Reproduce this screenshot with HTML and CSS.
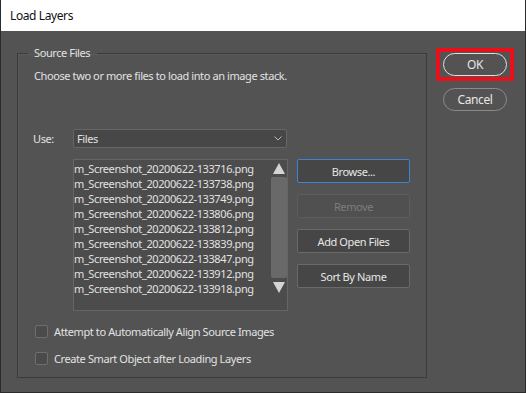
FILE: index.html
```html
<!DOCTYPE html>
<html lang="en">
<head>
    <meta charset="UTF-8">
    <title>Load Layers</title>
    <link rel="stylesheet" href="styles.css">
</head>
<body>
    <div class="dialog">
        <div class="titlebar">Load Layers</div>
        <div class="dialog-body">
            <fieldset class="group">
                <legend>Source Files</legend>
                <p class="hint">Choose two or more files to load into an image stack.</p>

                <div class="use-row">
                    <span class="use-label">Use:</span>
                    <div class="select">
                        <span>Files</span>
                        <svg class="chevron" width="8" height="5" viewBox="0 0 8 5">
                            <polyline points="0.5,0.5 4,4 7.5,0.5" fill="none" stroke="#b8b8b8" stroke-width="1"/>
                        </svg>
                    </div>
                </div>

                <div class="files-row">
                    <div class="file-list">
                        <ul class="files">
                            <li>m_Screenshot_20200622-133716.png</li>
                            <li>m_Screenshot_20200622-133738.png</li>
                            <li>m_Screenshot_20200622-133749.png</li>
                            <li>m_Screenshot_20200622-133806.png</li>
                            <li>m_Screenshot_20200622-133812.png</li>
                            <li>m_Screenshot_20200622-133839.png</li>
                            <li>m_Screenshot_20200622-133847.png</li>
                            <li>m_Screenshot_20200622-133912.png</li>
                            <li>m_Screenshot_20200622-133918.png</li>
                        </ul>
                        <div class="scrollbar">
                            <svg class="arrow" width="12" height="11" viewBox="0 0 12 11">
                                <polygon points="6,0 12,11 0,11" fill="#d4d4d4"/>
                            </svg>
                            <div class="thumb"></div>
                            <svg class="arrow" width="12" height="11" viewBox="0 0 12 11">
                                <polygon points="0,0 12,0 6,11" fill="#d4d4d4"/>
                            </svg>
                        </div>
                    </div>
                    <div class="file-buttons">
                        <button class="btn focused">Browse...</button>
                        <button class="btn" disabled>Remove</button>
                        <button class="btn">Add Open Files</button>
                        <button class="btn">Sort By Name</button>
                    </div>
                </div>

                <label class="check"><span class="box"></span>Attempt to Automatically Align Source Images</label>
                <label class="check"><span class="box"></span>Create Smart Object after Loading Layers</label>
            </fieldset>

            <div class="actions">
                <div class="ok-mark">
                    <button class="pill primary">OK</button>
                </div>
                <button class="pill">Cancel</button>
            </div>
        </div>
    </div>
</body>
</html>
```

FILE: styles.css
```css
body {
    margin: 0;
    background-color: #535353;
    font-family: "Noto Sans", sans-serif;
    font-size: 11px;
    letter-spacing: -0.4px;
}
.dialog {
    width: 524px;
    height: 392px;
    border: 1px solid #2b2b2b;
    border-top: none;
    background-color: #535353;
    color: #e2e2e2;
}
.titlebar {
    height: 31px;
    line-height: 32px;
    padding-left: 9px;
    background-color: #fff;
    color: #111;
    font-size: 12px;
}
.dialog-body {
    display: flex;
    align-items: flex-start;
    gap: 9px;
    padding-left: 16px;
}
.group {
    box-sizing: border-box;
    width: 410px;
    height: 332px;
    margin: 15px 0 0;
    padding: 0 15px;
    border: 1px solid #3b3b3b;
    box-shadow: inset 1px 1px 0 #5a5a5a;
}
.group legend {
    margin-left: -5px;
    padding: 0 7px 0 6px;
    line-height: 14px;
}
.hint {
    margin: 8px 0 0 1px;
    line-height: 15px;
}
.use-row {
    display: flex;
    align-items: center;
    margin-top: 46px;
}
.use-label {
    width: 40px;
}
.select {
    display: flex;
    align-items: center;
    justify-content: space-between;
    box-sizing: border-box;
    width: 214px;
    height: 19px;
    padding: 0 4px 0 3px;
    border: 1px solid #666;
    background-color: #474747;
    border-radius: 2px;
}
.files-row {
    display: flex;
    gap: 9px;
    margin: 11px 0 0 40px;
}
.file-list {
    display: flex;
    box-sizing: border-box;
    width: 215px;
    height: 152px;
    border: 1px solid #666;
    background-color: #4c4c4c;
}
.files {
    flex: 1;
    margin: 0;
    padding: 1px 0 0;
    list-style: none;
    line-height: 15px;
    white-space: nowrap;
    overflow: hidden;
}
.scrollbar {
    display: flex;
    flex-direction: column;
    align-items: center;
    width: 16px;
    height: 130px;
    padding-top: 3px;
}
.thumb {
    width: 16px;
    flex: 1;
    margin: 3px 0 4px;
    background-color: #696969;
    border-radius: 2px;
}
.file-buttons {
    display: flex;
    flex-direction: column;
    gap: 11px;
}
.btn {
    box-sizing: border-box;
    width: 113px;
    height: 24px;
    padding: 0;
    border: 1px solid #696969;
    border-radius: 2px;
    background-color: #464646;
    color: #e6e6e6;
    font: inherit;
    letter-spacing: inherit;
}
.btn.focused {
    border-color: #3f83d4;
}
.btn:disabled {
    border-color: #5d5d5d;
    background-color: #505050;
    color: #7d7d7d;
}
.check {
    display: flex;
    align-items: center;
    gap: 6px;
    margin: 13px 0 0 2px;
    line-height: 15px;
}
.check + .check {
    margin-top: 12px;
}
.box {
    box-sizing: border-box;
    width: 13px;
    height: 13px;
    border: 1px solid #6e6e6e;
    border-radius: 2px;
    background-color: #4b4b4b;
}
.actions {
    display: flex;
    flex-direction: column;
    align-items: center;
    gap: 7px;
    margin-top: 17px;
}
.ok-mark {
    padding: 1px 3px;
    border: 4px solid #e8101a;
}
.pill {
    box-sizing: border-box;
    width: 64px;
    height: 23px;
    padding: 0;
    border: 1px solid #8a8a8a;
    border-radius: 12px;
    background-color: #535353;
    color: #e6e6e6;
    font: inherit;
    font-size: 12px;
    letter-spacing: inherit;
}
.pill.primary {
    border-color: #e0e0e0;
}
```
